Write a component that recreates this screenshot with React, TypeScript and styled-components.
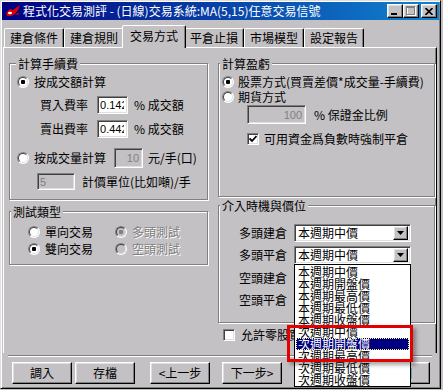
import React from 'react';
import styled, { createGlobalStyle, css } from 'styled-components';

const FACE = '#c4c1c4';
const CJK = '"Noto Sans CJK TC", "Noto Sans CJK SC", sans-serif';
const SANS = '"Liberation Sans", Arial, sans-serif';

const GlobalStyle = createGlobalStyle`
  * { box-sizing: border-box; }
  html, body { margin: 0; padding: 0; background: ${FACE}; }
  body { font-family: ${CJK}; font-size: 12px; line-height: 14px; color: #000; }
`;

const raised = css`
  border: 1px solid;
  border-color: #fff #000 #000 #fff;
  box-shadow: inset -1px -1px #808080, inset 1px 1px #dfdfdf;
`;

const sunken = css`
  border: 1px solid;
  border-color: #808080 #fff #fff #808080;
  box-shadow: inset 1px 1px #404040, inset -1px -1px #dfdfdf;
`;

const Window = styled.div`
  width: 441px;
  height: 389px;
  padding: 1px;
  background: ${FACE};
  border: 1px solid;
  border-color: #dfdfdf #000 #000 #dfdfdf;
  box-shadow: inset 1px 1px #fff, inset -1px -1px #808080;
  display: flex;
  flex-direction: column;
`;

const TitleBar = styled.div`
  flex: none;
  height: 18px;
  display: flex;
  align-items: center;
  padding: 0 2px 0 3px;
  background: linear-gradient(90deg, #000080 0%, #1084d0 100%);
  color: #fff;
`;

const TitleText = styled.span`
  flex: 1;
  margin-left: 2px;
  white-space: nowrap;
`;

const CaptionButton = styled.div<{ $gap?: number }>`
  ${raised};
  width: 16px;
  height: 14px;
  margin-left: ${p => p.$gap ?? 0}px;
  background: ${FACE};
  display: flex;
  align-items: center;
  justify-content: center;
`;

const TabStrip = styled.div`
  flex: none;
  display: flex;
  align-items: flex-end;
  height: 22px;
  margin-top: 5px;
  padding-left: 2px;
  position: relative;
  z-index: 1;
`;

const Tab = styled.div<{ $active?: boolean }>`
  width: 60px;
  height: 19px;
  border: 1px solid;
  border-bottom: none;
  border-color: #fff #000 transparent #fff;
  border-radius: 2px 2px 0 0;
  box-shadow: inset -1px 0 #808080;
  background: ${FACE};
  display: flex;
  align-items: center;
  justify-content: center;
  white-space: nowrap;
  ${p =>
    p.$active &&
    css`
      width: 64px;
      height: 23px;
      margin: 0 -2px -1px;
      position: relative;
      z-index: 2;
      padding-bottom: 2px;
    `}
`;

const Panel = styled.div`
  flex: none;
  position: relative;
  width: 434px;
  height: 306px;
  margin-left: 1px;
  border-top: 1px solid #fff;
  border-left: 1px solid #fff;
  border-right: 1px solid #000;
  box-shadow: inset -1px 0 #808080;
  padding: 9px 0 0 5px;
  display: grid;
  grid-template-columns: 199px 217px;
  column-gap: 10px;
  align-items: start;
`;

const Column = styled.div`
  display: flex;
  flex-direction: column;
`;

const Group = styled.fieldset<{ $h: number; $mt?: number }>`
  margin: ${p => p.$mt ?? 0}px 0 0;
  padding: 0;
  min-width: 0;
  height: ${p => p.$h}px;
  border: 1px solid #808080;
  box-shadow: inset 1px 1px #fff, 1px 1px #fff;
`;

const Legend = styled.legend<{ $ml: number }>`
  margin-left: ${p => p.$ml}px;
  padding: 0 2px;
  height: 13px;
  line-height: 13px;
  background: ${FACE};
`;

const Row = styled.div<{ $mt?: number; $pl?: number; $h: number }>`
  display: flex;
  align-items: center;
  height: ${p => p.$h}px;
  margin-top: ${p => p.$mt ?? 0}px;
  padding-left: ${p => p.$pl ?? 0}px;
  white-space: nowrap;
`;

const Caption = styled.span<{ $ml?: number; $disabled?: boolean }>`
  margin-left: ${p => p.$ml ?? 0}px;
  ${p =>
    p.$disabled &&
    css`
      color: #808080;
      text-shadow: 1px 1px #fff;
    `}
`;

const Choice = styled.span<{ $w?: number }>`
  display: flex;
  align-items: center;
  width: ${p => (p.$w ? `${p.$w}px` : 'auto')};
`;

const Radio = styled.span<{ $checked?: boolean; $disabled?: boolean }>`
  position: relative;
  flex: none;
  width: 12px;
  height: 12px;
  border-radius: 50%;
  border: 1px solid;
  border-color: #808080 #fff #fff #808080;
  background: ${p => (p.$disabled ? FACE : '#fff')};
  &::before {
    content: '';
    position: absolute;
    inset: 0;
    border-radius: 50%;
    border: 1px solid;
    border-color: #404040 #dfdfdf #dfdfdf #404040;
  }
  &::after {
    content: '';
    display: ${p => (p.$checked ? 'block' : 'none')};
    position: absolute;
    left: 3px;
    top: 3px;
    width: 4px;
    height: 4px;
    border-radius: 1px;
    background: ${p => (p.$disabled ? '#808080' : '#000')};
  }
`;

const CheckBox = styled.span<{ $size: number }>`
  ${sunken};
  flex: none;
  width: ${p => p.$size}px;
  height: ${p => p.$size}px;
  background: #fff;
  display: flex;
  align-items: center;
  justify-content: center;
`;

const Field = styled.input<{ $w: number; $h: number; $ml?: number; $right?: boolean }>`
  ${sunken};
  width: ${p => p.$w}px;
  height: ${p => p.$h}px;
  margin: 0 0 0 ${p => p.$ml ?? 0}px;
  padding: 0 3px 0 2px;
  background: #fff;
  font-family: ${SANS};
  font-size: 11px;
  color: #000;
  text-align: ${p => (p.$right ? 'right' : 'left')};
  outline: none;
  &:disabled {
    background: ${FACE};
    color: #808080;
  }
`;

const Combo = styled.div<{ $ml?: number }>`
  ${sunken};
  position: relative;
  width: 117px;
  height: 18px;
  margin-left: ${p => p.$ml ?? 0}px;
  background: #fff;
  display: flex;
  align-items: center;
  padding: 2px 2px 2px 3px;
`;

const ComboText = styled.span`
  flex: 1;
  line-height: 12px;
`;

const ComboArrow = styled.span`
  ${raised};
  width: 15px;
  height: 14px;
  background: ${FACE};
  display: flex;
  align-items: center;
  justify-content: center;
`;

const DropList = styled.div`
  position: absolute;
  z-index: 10;
  top: 100%;
  left: -1px;
  width: 117px;
  margin-top: 1px;
  border: 1px solid #000;
  background: #fff;
  padding: 1px 0 0 1px;
`;

const ListItem = styled.div<{ $selected?: boolean }>`
  height: 12px;
  line-height: 12px;
  padding-left: 2px;
  margin-right: 1px;
  white-space: nowrap;
  ${p =>
    p.$selected &&
    css`
      background: #000080;
      color: #fff;
      outline: 1px dotted #ffff80;
      outline-offset: -1px;
    `}
`;

const Highlight = styled.div`
  position: absolute;
  left: -8px;
  top: 60px;
  width: 126px;
  height: 37px;
  border: 3px solid #e40000;
  box-shadow: 3px 3px 4px rgba(0, 0, 0, 0.35);
  pointer-events: none;
`;

const Separator = styled.div`
  flex: none;
  height: 2px;
  margin: 2px 7px 0 6px;
  border-top: 1px solid #808080;
  border-bottom: 1px solid #fff;
`;

const ButtonRow = styled.div`
  flex: none;
  display: flex;
  margin-top: 5px;
  padding-left: 10px;
`;

const PushButton = styled.div<{ $gap?: number }>`
  ${raised};
  width: 60px;
  height: 22px;
  margin-left: ${p => p.$gap ?? 0}px;
  background: ${FACE};
  display: flex;
  align-items: center;
  justify-content: center;
  white-space: nowrap;
`;

const AppIcon = () => (
  <svg width="16" height="14" viewBox="0 0 16 14">
    <path d="M1 9 L5 5 L8 6 L15 1 L13 6 L10 10 L6 12 L2 12 Z" fill="#e00000" />
    <path d="M10 10 L15 9 L13 11 Z" fill="#e00000" />
    <ellipse cx="5" cy="9" rx="2" ry="1.2" fill="#fff" />
  </svg>
);

const DownArrow = () => (
  <svg width="7" height="4" viewBox="0 0 7 4">
    <path d="M0 0 H7 L3.5 4 Z" fill="#000" />
  </svg>
);

const Tick = () => (
  <svg width="8" height="8" viewBox="0 0 8 8">
    <path d="M0.5 3.5 L3 6 L7.5 1" stroke="#000" strokeWidth="1.8" fill="none" />
  </svg>
);

const TABS = ['建倉條件', '建倉規則', '交易方式', '平倉止損', '市場模型', '設定報告'];

const PRICES = [
  '本週期中價',
  '本週期開盤價',
  '本週期最高價',
  '本週期最低價',
  '本週期收盤價',
  '次週期中價',
  '次週期開盤價',
  '次週期最高價',
  '次週期最低價',
  '次週期收盤價',
];

const BUTTONS: { label: string; gap: number }[] = [
  { label: '調入', gap: 0 },
  { label: '存檔', gap: 3 },
  { label: '<上一步', gap: 15 },
  { label: '下一步>', gap: 12 },
  { label: '完成', gap: 12 },
  { label: '說明', gap: 16 },
];

export default function App() {
  return (
    <>
      <GlobalStyle />
      <Window>
        <TitleBar>
          <AppIcon />
          <TitleText>程式化交易測評 - (日線)交易系統:MA(5,15)任意交易信號</TitleText>
          <CaptionButton>
            <svg width="8" height="8" viewBox="0 0 8 8">
              <rect x="0" y="6" width="6" height="2" fill="#000" />
            </svg>
          </CaptionButton>
          <CaptionButton>
            <svg width="10" height="10" viewBox="0 0 10 10">
              <rect x="1.5" y="1.5" width="8" height="8" fill="none" stroke="#fff" />
              <rect x="0.5" y="0.5" width="8" height="8" fill="none" stroke="#808080" />
              <rect x="0" y="0" width="9" height="2" fill="#808080" />
            </svg>
          </CaptionButton>
          <CaptionButton $gap={2}>
            <svg width="8" height="7" viewBox="0 0 8 7">
              <path d="M0.5 0 L7.5 7 M7.5 0 L0.5 7" stroke="#000" strokeWidth="1.6" />
            </svg>
          </CaptionButton>
        </TitleBar>

        <TabStrip>
          {TABS.map(t => (
            <Tab key={t} $active={t === '交易方式'}>
              {t}
            </Tab>
          ))}
        </TabStrip>

        <Panel>
          <Column>
            <Group $h={143}>
              <Legend $ml={6}>計算手續費</Legend>
              <Row $mt={4} $h={16} $pl={7}>
                <Radio $checked />
                <Caption $ml={5}>按成交額計算</Caption>
              </Row>
              <Row $mt={6} $h={18} $pl={30}>
                <Caption>買入費率</Caption>
                <Field $w={31} $h={18} $ml={9} defaultValue="0.1425" />
                <Caption $ml={6}>% 成交額</Caption>
              </Row>
              <Row $mt={6} $h={18} $pl={30}>
                <Caption>賣出費率</Caption>
                <Field $w={31} $h={18} $ml={9} defaultValue="0.4425" />
                <Caption $ml={6}>% 成交額</Caption>
              </Row>
              <Row $mt={10} $h={20} $pl={7}>
                <Radio />
                <Caption $ml={5}>按成交量計算</Caption>
                <Field $w={29} $h={20} $ml={8} $right disabled defaultValue="10" />
                <Caption $ml={5}>元/手(口)</Caption>
              </Row>
              <Row $mt={5} $h={17} $pl={27}>
                <Field $w={38} $h={17} disabled defaultValue="5" />
                <Caption $ml={7}>計價單位(比如噸)/手</Caption>
              </Row>
            </Group>

            <Group $h={60} $mt={5}>
              <Legend $ml={1}>測試類型</Legend>
              <Row $mt={7} $h={14} $pl={18}>
                <Choice $w={87}>
                  <Radio />
                  <Caption $ml={5}>單向交易</Caption>
                </Choice>
                <Choice>
                  <Radio $checked $disabled />
                  <Caption $ml={5} $disabled>
                    多頭測試
                  </Caption>
                </Choice>
              </Row>
              <Row $mt={3} $h={14} $pl={18}>
                <Choice $w={87}>
                  <Radio $checked />
                  <Caption $ml={5}>雙向交易</Caption>
                </Choice>
                <Choice>
                  <Radio $disabled />
                  <Caption $ml={5} $disabled>
                    空頭測試
                  </Caption>
                </Choice>
              </Row>
            </Group>
          </Column>

          <Column>
            <Group $h={140}>
              <Legend $ml={1}>計算盈虧</Legend>
              <Row $mt={4} $h={16} $pl={3}>
                <Radio $checked />
                <Caption $ml={4}>股票方式(買賣差價*成交量-手續費)</Caption>
              </Row>
              <Row $h={14} $pl={3}>
                <Radio />
                <Caption $ml={4}>期貨方式</Caption>
              </Row>
              <Row $mt={1} $h={19} $pl={28}>
                <Field $w={59} $h={19} $right disabled defaultValue="100" />
                <Caption $ml={8}>% 保證金比例</Caption>
              </Row>
              <Row $mt={8} $h={14} $pl={28}>
                <CheckBox $size={12}>
                  <Tick />
                </CheckBox>
                <Caption $ml={5}>可用資金爲負數時強制平倉</Caption>
              </Row>
            </Group>

            <Group $h={124} $mt={2}>
              <Legend $ml={1}>介入時機與價位</Legend>
              <Row $mt={12} $h={18} $pl={20}>
                <Caption>多頭建倉</Caption>
                <Combo $ml={7}>
                  <ComboText>本週期中價</ComboText>
                  <ComboArrow>
                    <DownArrow />
                  </ComboArrow>
                </Combo>
              </Row>
              <Row $mt={4} $h={18} $pl={20}>
                <Caption>多頭平倉</Caption>
                <Combo $ml={7}>
                  <ComboText>本週期中價</ComboText>
                  <ComboArrow>
                    <DownArrow />
                  </ComboArrow>
                  <DropList>
                    {PRICES.map((p, i) => (
                      <ListItem key={p} $selected={i === 6}>
                        {p}
                      </ListItem>
                    ))}
                    <Highlight />
                  </DropList>
                </Combo>
              </Row>
              <Row $mt={5} $h={18} $pl={20}>
                <Caption>空頭建倉</Caption>
                <Combo $ml={7}>
                  <ComboText>本週期中價</ComboText>
                  <ComboArrow>
                    <DownArrow />
                  </ComboArrow>
                </Combo>
              </Row>
              <Row $mt={4} $h={18} $pl={20}>
                <Caption>空頭平倉</Caption>
                <Combo $ml={7}>
                  <ComboText>本週期中價</ComboText>
                  <ComboArrow>
                    <DownArrow />
                  </ComboArrow>
                </Combo>
              </Row>
            </Group>

            <Row $mt={6} $h={12} $pl={5}>
              <CheckBox $size={12} />
              <Caption $ml={6}>允許零股買賣</Caption>
            </Row>
          </Column>
        </Panel>

        <Separator />

        <ButtonRow>
          {BUTTONS.map(b => (
            <PushButton key={b.label} $gap={b.gap}>
              {b.label}
            </PushButton>
          ))}
        </ButtonRow>
      </Window>
    </>
  );
}
